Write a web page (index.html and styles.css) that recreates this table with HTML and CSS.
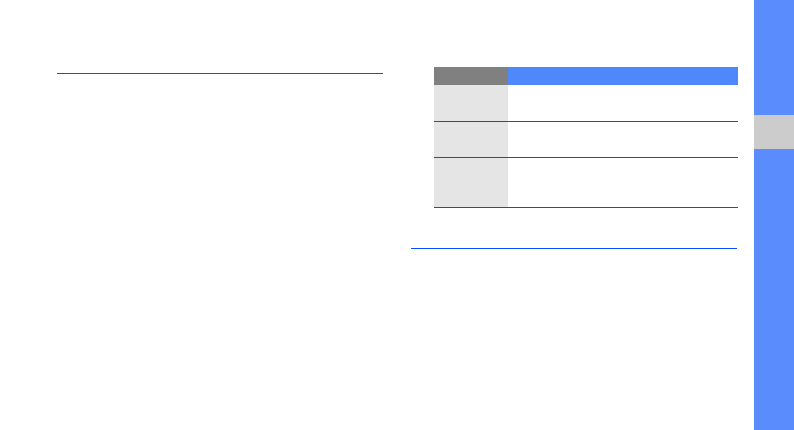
FILE: index.html
```html
<!DOCTYPE html>
<html>
<head>
<meta charset="utf-8">
<link rel="stylesheet" href="styles.css">
</head>
<body>
<div class="page">
  <div class="col-left">
    <div class="rule"></div>
  </div>
  <div class="col-right">
    <div class="table">
      <div class="row head">
        <div class="cell key"></div>
        <div class="cell val"></div>
      </div>
      <div class="row r1">
        <div class="cell key"></div>
        <div class="cell val"></div>
      </div>
      <div class="row r2">
        <div class="cell key"></div>
        <div class="cell val"></div>
      </div>
      <div class="row r3">
        <div class="cell key"></div>
        <div class="cell val"></div>
      </div>
    </div>
    <div class="rule rule-right"></div>
  </div>
  <div class="sidebar">
    <div class="tab-top"></div>
    <div class="tab-active"></div>
    <div class="tab-bottom"></div>
  </div>
</div>
</body>
</html>
```
FILE: styles.css
```css
html, body {
  margin: 0;
  padding: 0;
  background: #ffffff;
  font-family: "Liberation Sans", Arial, sans-serif;
}
.page {
  width: 794px;
  height: 430px;
  display: flex;
  overflow: hidden;
}
.col-left {
  width: 354px;
  padding-left: 57px;
  padding-top: 73px;
}
.rule {
  width: 326px;
  height: 1px;
  background: #0a4cff;
}
.col-right {
  width: 343px;
  padding-top: 67px;
}
.table {
  margin-left: 23px;
  width: 304px;
}
.row {
  display: grid;
  grid-template-columns: 74px 230px;
  border-bottom: 1px solid #4a4a4a;
}
.row.head {
  height: 18px;
  border-bottom: none;
}
.head .key { background: #808080; }
.head .val { background: #4f88fb; }
.r1 { height: 36px; }
.r2 { height: 35px; }
.r3 { height: 49px; }
.row .key { background: #e5e5e5; }
.row.head .key { background: #808080; }
.rule-right {
  margin-top: 40px;
  width: 326px;
}
.sidebar {
  width: 40px;
  display: flex;
  flex-direction: column;
}
.tab-top {
  height: 115px;
  background: #5b8cfd;
}
.tab-active {
  height: 34px;
  background: #cccccc;
}
.tab-bottom {
  flex: 1;
  background: #5b8cfd;
}
```
